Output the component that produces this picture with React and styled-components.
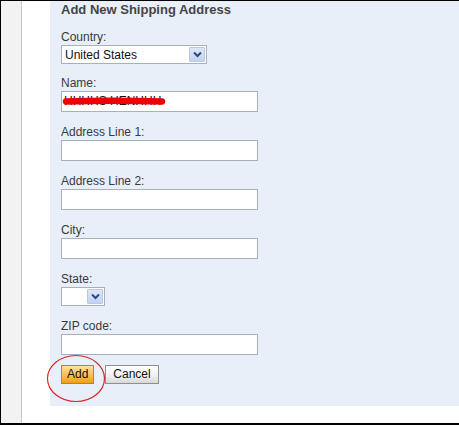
import React from "react";
import styled, { createGlobalStyle } from "styled-components";

const GlobalStyle = createGlobalStyle`
  html, body {
    margin: 0;
    padding: 0;
    background: #ffffff;
  }
  body {
    font-family: "Liberation Sans", Arial, sans-serif;
  }
`;

const Frame = styled.div`
  box-sizing: border-box;
  width: 459px;
  height: 425px;
  border-top: 1px solid #000;
  border-left: 1px solid #000;
  border-bottom: 2px solid #000;
  display: flex;
  overflow: hidden;
`;

const Gutter = styled.div`
  width: 20px;
  flex: none;
  background: #f2f2f2;
  border-right: 1px solid #c6c6c6;
`;

const Spacer = styled.div`
  width: 28px;
  flex: none;
  background: #ffffff;
`;

const Main = styled.div`
  flex: 1;
  display: flex;
  flex-direction: column;
`;

const Panel = styled.div`
  box-sizing: border-box;
  height: 405px;
  background: #e8eff9;
  padding: 1px 0 0 11px;
  position: relative;
`;

const Heading = styled.h2`
  margin: 0 0 13px;
  width: 171px;
  overflow: hidden;
  white-space: nowrap;
  font-size: 13px;
  line-height: 15px;
  font-weight: bold;
  color: #454545;
`;

const Field = styled.div`
  margin-bottom: ${p => p.gap ?? 13}px;
`;

const Label = styled.div`
  font-size: 12px;
  line-height: 14px;
  color: #3a3a3a;
  margin-bottom: 1px;
`;

const TextBox = styled.div`
  box-sizing: border-box;
  position: relative;
  width: 197px;
  height: 21px;
  background: #fff;
  border: 1px solid #a7b0bb;
  font-size: 12px;
  line-height: 19px;
  padding-left: 2px;
  color: #111;
  overflow: hidden;
`;

const Scribble = styled.svg`
  position: absolute;
  left: 0;
  top: 0;
`;

const SelectBox = styled.div`
  box-sizing: border-box;
  width: ${p => p.width}px;
  height: 19px;
  background: #fff;
  border: 1px solid #a7b0bb;
  display: flex;
  align-items: center;
  justify-content: space-between;
  font-size: 12px;
  color: #111;
  padding: 0 1px 0 3px;
`;

const Arrow = styled.div`
  box-sizing: border-box;
  width: 16px;
  height: 15px;
  border: 1px solid #b9c8e6;
  border-radius: 1px;
  background: linear-gradient(#dfe7f8, #c3d2f0);
  display: flex;
  align-items: center;
  justify-content: center;
`;

const Buttons = styled.div`
  display: flex;
  gap: 11px;
  margin-top: -3px;
  position: relative;
`;

const Button = styled.button`
  box-sizing: border-box;
  height: 19px;
  padding: 0 ${p => (p.primary ? 5 : 7)}px;
  font-family: "Liberation Sans", Arial, sans-serif;
  font-size: 12px;
  line-height: 17px;
  color: #111;
  border: 1px solid ${p => (p.primary ? "#b8832c" : "#8f8f8f")};
  background: ${p =>
    p.primary
      ? "linear-gradient(#fde29a 0%, #fbc25a 50%, #f29d1c 100%)"
      : "linear-gradient(#ffffff 0%, #f1f1f1 55%, #d8d8d8 100%)"};
  border-radius: 0;
  cursor: pointer;
`;

const Circle = styled.svg`
  position: absolute;
  left: -15px;
  top: -11px;
  pointer-events: none;
`;

const Chevron = () => (
  <svg width="9" height="7" viewBox="0 0 9 7">
    <path d="M1 1.5 L4.5 5 L8 1.5" fill="none" stroke="#2c4a8a" strokeWidth="2" />
  </svg>
);

function Select({ width, value }) {
  return (
    <SelectBox width={width}>
      <span>{value}</span>
      <Arrow>
        <Chevron />
      </Arrow>
    </SelectBox>
  );
}

export default function App() {
  return (
    <>
      <GlobalStyle />
      <Frame>
        <Gutter />
        <Spacer />
        <Main>
          <Panel>
            <Heading>Add New Shipping Address</Heading>
            <Field gap={12}>
              <Label>Country:</Label>
              <Select width={146} value="United States" />
            </Field>
            <Field>
              <Label>Name:</Label>
              <TextBox>
                HHHHS HENHHH
                <Scribble width="120" height="19">
                  <path
                    d="M4 9.5 C30 8.5 70 8.5 100 9.5"
                    stroke="#ee0000"
                    strokeWidth="6.5"
                    strokeLinecap="round"
                    fill="none"
                  />
                </Scribble>
              </TextBox>
            </Field>
            <Field>
              <Label>Address Line 1:</Label>
              <TextBox />
            </Field>
            <Field>
              <Label>Address Line 2:</Label>
              <TextBox />
            </Field>
            <Field>
              <Label>City:</Label>
              <TextBox />
            </Field>
            <Field>
              <Label>State:</Label>
              <Select width={44} value="" />
            </Field>
            <Field>
              <Label>ZIP code:</Label>
              <TextBox />
            </Field>
            <Buttons>
              <Button primary>Add</Button>
              <Button>Cancel</Button>
              <Circle width="62" height="50">
                <ellipse cx="30" cy="24.5" rx="28.5" ry="23" fill="none" stroke="#d9262a" strokeWidth="1.2" />
              </Circle>
            </Buttons>
          </Panel>
        </Main>
      </Frame>
    </>
  );
}
